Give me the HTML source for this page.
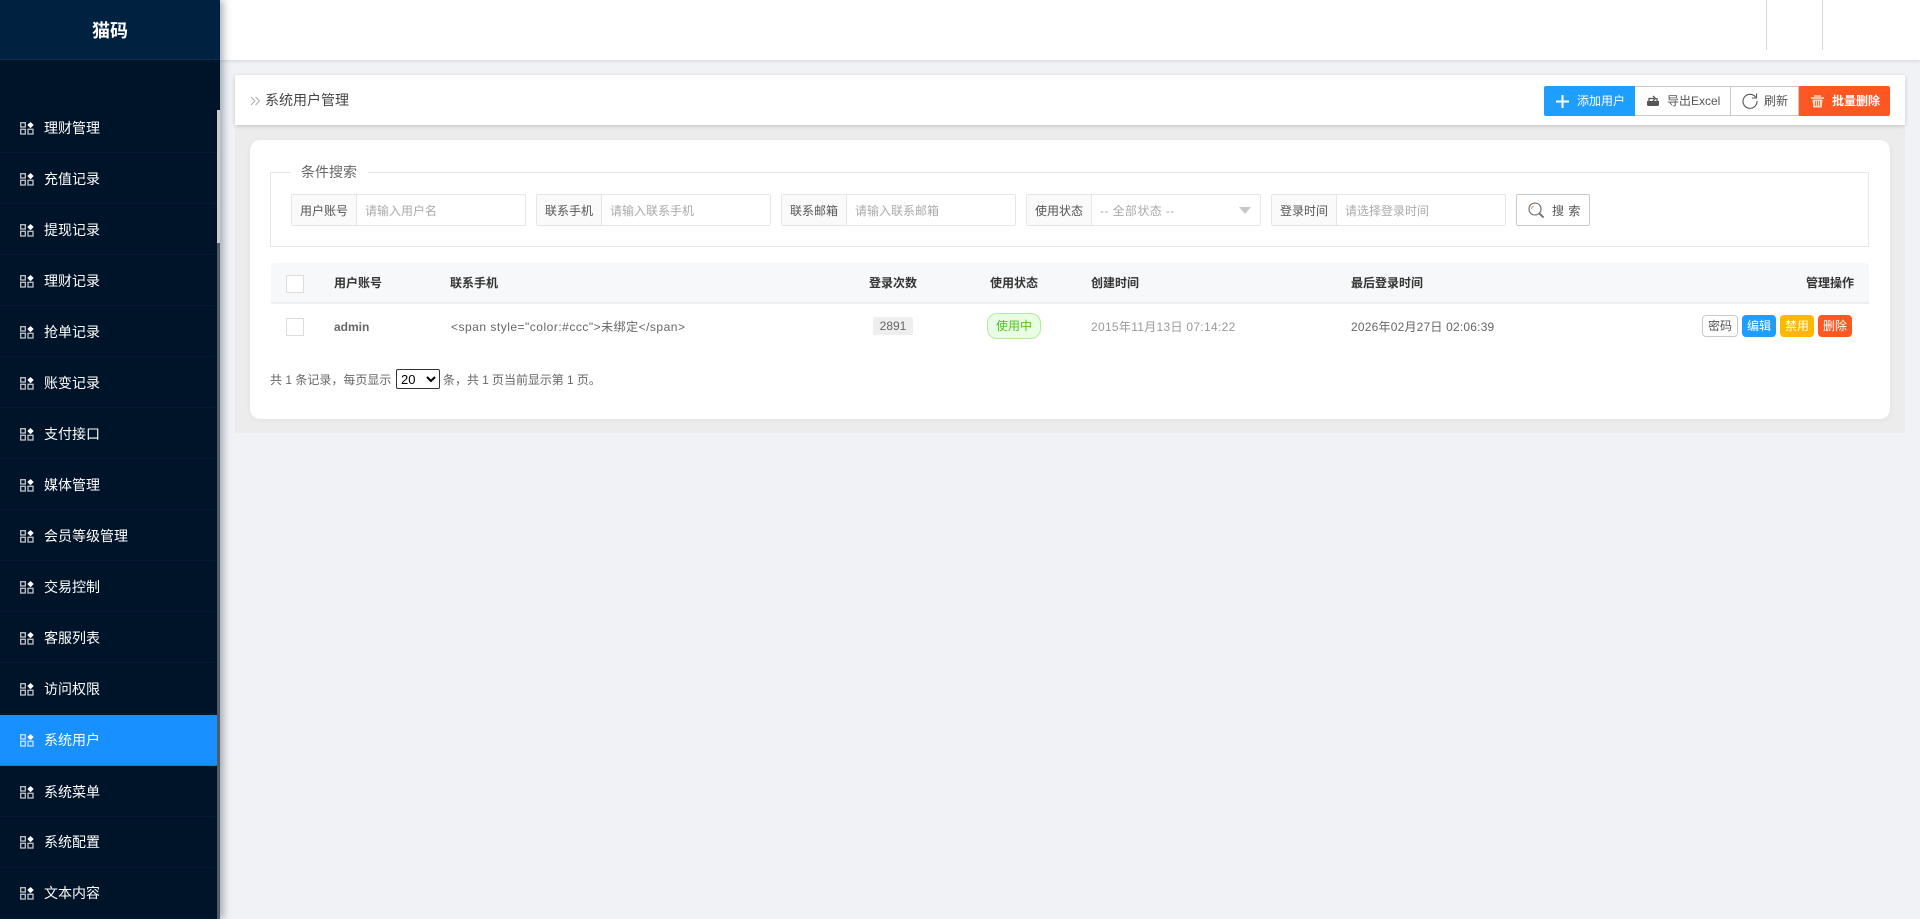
<!DOCTYPE html>
<html lang="zh-CN">
<head>
<meta charset="utf-8">
<title>系统用户管理</title>
<style>
*{box-sizing:border-box;margin:0;padding:0}
html,body{width:1920px;height:919px;overflow:hidden;background:#f0f2f6;font-family:"Liberation Sans","Noto Sans CJK SC",sans-serif;font-size:12px;color:#555}
.a{position:absolute;white-space:nowrap}
#side{left:0;top:0;width:220px;height:919px;background:#001429;box-shadow:3px 0 8px rgba(0,21,41,.35);z-index:5}
#logo{left:0;top:0;width:220px;height:60px;background:#002140;border-bottom:1px solid #0a2c4c;color:#fff;font-size:18px;font-weight:bold;text-align:center;line-height:62px}
.mi{left:0;width:217px;height:51px;line-height:53px;color:#fff;font-size:14px;padding-left:44px;border-bottom:1px solid #001a30}
.mi svg{position:absolute;left:20px;top:20px}
.mi.on{background:#1890ff;border-bottom:1px solid #0a8a9a}
#sb1{left:217px;top:110px;width:3px;height:133px;background:#c9cbce}
#sb2{left:217px;top:243px;width:3px;height:676px;background:#555a60}
#head{left:220px;top:0;width:1700px;height:60px;background:#fff;box-shadow:0 1px 4px rgba(0,0,0,.12)}
.vl{top:0;width:1px;height:50px;background:#d8d8d8}
#zone{left:235px;top:125px;width:1670px;height:308px;background:#ececec}
#crumb{left:235px;top:75px;width:1670px;height:50px;background:#fff;box-shadow:0 1px 4px rgba(0,0,0,.18)}
#card{left:250px;top:140px;width:1640px;height:279px;background:#fff;border-radius:10px;box-shadow:0 1px 6px rgba(0,0,0,.05)}
.btn{top:86px;height:30px;line-height:29px;font-size:12px;background:#fff;border:1px solid #c9c9c9;color:#555}
.btn svg{position:absolute}
.btn span{position:absolute;top:0}
#fs{left:270px;top:172px;width:1599px;height:75px;border:1px solid #e6e6e6}
#lg{left:290px;top:162px;width:78px;height:20px;background:#fff;color:#666;font-size:14px;line-height:20px;text-align:center}
.ig{top:194px;height:32px;width:235px;border:1px solid #e6e6e6;border-radius:2px;background:#fff}
.ig b{position:absolute;left:0;top:0;width:65px;height:30px;font-weight:normal;background:#fafafa;border-right:1px solid #e6e6e6;text-align:center;line-height:32px;color:#555;font-size:12px}
.ig i{position:absolute;left:73px;top:0;font-style:normal;line-height:32px;color:#aaa;font-size:12px}
#th{left:271px;top:263px;width:1598px;height:41px;background:#f7f8fa;border-bottom:2px solid #eee;border-radius:4px 4px 0 0}
.cb{left:286px;width:18px;height:18px;border:1px solid #ddd;background:#fff}
.h{top:274px;line-height:18px;color:#333;font-size:12px;font-weight:bold}
.d{top:318px;line-height:18px;font-size:12px;color:#666}
.ab{top:315px;height:22px;line-height:20px;width:34px;text-align:center;border-radius:4px;color:#fff;font-size:12px;border:1px solid transparent}
</style>
</head>
<body>
<svg width="0" height="0" style="position:absolute"><defs>
<symbol id="ic" viewBox="0 0 14 13"><g fill="none" stroke="#fff" stroke-width="1.300" opacity=".75"><rect x=".7" y=".7" width="4.600" height="4.300"/><rect x=".7" y="7.300" width="4.600" height="4.700"/><rect x="8" y="7.300" width="5" height="4.700"/></g><path d="M10.500 0l3.200 3-3.200 3.200L7.300 3z" fill="#fff"/></symbol>
</defs></svg>

<div class="a" id="side">
  <div class="a" id="logo">猫码</div>
  <div class="a mi" style="top:102px"><svg width="14" height="13"><use href="#ic"/></svg>理财管理</div>
  <div class="a mi" style="top:153px"><svg width="14" height="13"><use href="#ic"/></svg>充值记录</div>
  <div class="a mi" style="top:204px"><svg width="14" height="13"><use href="#ic"/></svg>提现记录</div>
  <div class="a mi" style="top:255px"><svg width="14" height="13"><use href="#ic"/></svg>理财记录</div>
  <div class="a mi" style="top:306px"><svg width="14" height="13"><use href="#ic"/></svg>抢单记录</div>
  <div class="a mi" style="top:357px"><svg width="14" height="13"><use href="#ic"/></svg>账变记录</div>
  <div class="a mi" style="top:408px"><svg width="14" height="13"><use href="#ic"/></svg>支付接口</div>
  <div class="a mi" style="top:459px"><svg width="14" height="13"><use href="#ic"/></svg>媒体管理</div>
  <div class="a mi" style="top:510px"><svg width="14" height="13"><use href="#ic"/></svg>会员等级管理</div>
  <div class="a mi" style="top:561px"><svg width="14" height="13"><use href="#ic"/></svg>交易控制</div>
  <div class="a mi" style="top:612px"><svg width="14" height="13"><use href="#ic"/></svg>客服列表</div>
  <div class="a mi" style="top:663px"><svg width="14" height="13"><use href="#ic"/></svg>访问权限</div>
  <div class="a mi on" style="top:715px;line-height:50px"><svg width="14" height="13" style="top:19px"><use href="#ic"/></svg>系统用户</div>
  <div class="a mi" style="top:766px"><svg width="14" height="13"><use href="#ic"/></svg>系统菜单</div>
  <div class="a mi" style="top:817px;line-height:51px"><svg width="14" height="13" style="top:19px"><use href="#ic"/></svg>系统配置</div>
  <div class="a mi" style="top:868px;line-height:51px"><svg width="14" height="13" style="top:19px"><use href="#ic"/></svg>文本内容</div>
  <div class="a" id="sb1"></div>
  <div class="a" id="sb2"></div>
</div>

<div class="a" id="head"></div>
<div class="a vl" style="left:1766px"></div>
<div class="a vl" style="left:1822px"></div>

<div class="a" id="zone"></div>
<div class="a" id="crumb"></div>
<svg class="a" style="left:250px;top:96px" width="11" height="10" viewBox="0 0 11 10"><path d="M1 1l4 4-4 4M5.500 1l4 4-4 4" fill="none" stroke="#aaa" stroke-width="1"/></svg>
<div class="a" style="left:265px;top:90px;font-size:14px;line-height:20px;color:#444">系统用户管理</div>

<div class="a btn" style="left:1544px;width:91px;background:#1e9fff;border-color:#1e9fff;color:#fff;border-radius:2px 0 0 2px">
  <svg style="left:11px;top:8px" width="13" height="13" viewBox="0 0 13 13"><path d="M6.500 0v13M0 6.500h13" stroke="#fff" stroke-width="2"/></svg>
  <span style="left:32px">添加用户</span>
</div>
<div class="a btn" style="left:1635px;width:96px;border-left:0">
  <svg style="left:11px;top:6px" width="14" height="14" viewBox="0 0 14 14"><path d="M1 8h12v3.500q0 1.500-1.500 1.500h-9Q1 13 1 11.500z" fill="#555"/><path d="M3 8V5.500h5M7 3l2.500 2.500L7 8M11 8V5" fill="none" stroke="#555" stroke-width="1.300"/></svg>
  <span style="left:32px">导出Excel</span>
</div>
<div class="a btn" style="left:1730px;width:69px">
  <svg style="left:11px;top:6px" width="16" height="16" viewBox="0 0 16 16"><path d="M13.500 4A7 7 0 1 0 15 8" fill="none" stroke="#555" stroke-width="1.100"/><path d="M14.500 .5v4.500H10" fill="none" stroke="#555" stroke-width="1.100"/></svg>
  <span style="left:33px">刷新</span>
</div>
<div class="a btn" style="left:1799px;width:91px;background:#ff5722;border-color:#ff5722;color:#fff;border-radius:0 2px 2px 0;font-weight:bold">
  <svg style="left:11px;top:8px" width="13" height="13" viewBox="0 0 13 13"><path d="M0 3h13M3 1h7" stroke="#ffd9cc" stroke-width="1.400" fill="none"/><path d="M1.500 4.500h10l-.8 8H2.300z" fill="#ffd9cc"/><path d="M4.500 6v5M6.500 6v5M8.500 6v5" stroke="#ff5722" stroke-width=".8"/></svg>
  <span style="left:32px">批量删除</span>
</div>

<div class="a" id="card"></div>
<div class="a" id="fs"></div>
<div class="a" id="lg">条件搜索</div>

<div class="a ig" style="left:291px"><b>用户账号</b><i>请输入用户名</i></div>
<div class="a ig" style="left:536px"><b>联系手机</b><i>请输入联系手机</i></div>
<div class="a ig" style="left:781px"><b>联系邮箱</b><i>请输入联系邮箱</i></div>
<div class="a ig" style="left:1026px"><b>使用状态</b><i style="letter-spacing:.4px">-- 全部状态 --</i>
  <svg style="position:absolute;right:9px;top:12px" width="12" height="7" viewBox="0 0 12 7"><path d="M0 0h12L6 7z" fill="#c8c8c8"/></svg>
</div>
<div class="a ig" style="left:1271px"><b>登录时间</b><i>请选择登录时间</i></div>
<div class="a" style="left:1516px;top:194px;width:74px;height:32px;border:1px solid #c9c9c9;border-radius:2px;background:#fff;line-height:32px;font-size:12px;color:#555;padding-left:35px;letter-spacing:.5px">搜 索
  <svg style="position:absolute;left:11px;top:7px" width="17" height="17" viewBox="0 0 17 17"><circle cx="7" cy="7" r="6" fill="none" stroke="#666" stroke-width="1.100"/><path d="M11.500 11.500l4 4" stroke="#666" stroke-width="1.800"/><path d="M3.500 7a3.500 3.500 0 0 1 2-3" fill="none" stroke="#c96" stroke-width="1"/></svg>
</div>

<div class="a" id="th"></div>
<div class="a cb" style="top:275px"></div>
<div class="a h" style="left:334px">用户账号</div>
<div class="a h" style="left:450px">联系手机</div>
<div class="a h" style="left:869px">登录次数</div>
<div class="a h" style="left:990px">使用状态</div>
<div class="a h" style="left:1091px">创建时间</div>
<div class="a h" style="left:1351px">最后登录时间</div>
<div class="a h" style="left:1806px">管理操作</div>

<div class="a cb" style="top:318px"></div>
<div class="a d" style="left:334px;font-weight:bold">admin</div>
<div class="a d" style="left:451px;letter-spacing:.5px">&lt;span style="color:#ccc"&gt;未绑定&lt;/span&gt;</div>
<div class="a d" style="left:873px;top:317px;width:40px;height:18px;background:#eee;border-radius:2px;text-align:center">2891</div>
<div class="a d" style="left:987px;top:313px;width:54px;height:26px;line-height:24px;background:#e9fde5;border:1px solid #b4ec9e;border-radius:10px;color:#52c41a;text-align:center">使用中</div>
<div class="a d" style="left:1091px;color:#999;letter-spacing:.3px">2015年11月13日 07:14:22</div>
<div class="a d" style="left:1351px;letter-spacing:.2px">2026年02月27日 02:06:39</div>

<div class="a ab" style="left:1702px;width:36px;background:#fff;border-color:#c9c9c9;color:#555">密码</div>
<div class="a ab" style="left:1742px;background:#1e9fff">编辑</div>
<div class="a ab" style="left:1780px;background:#ffb800">禁用</div>
<div class="a ab" style="left:1818px;background:#ff5722">删除</div>

<div class="a" style="left:270px;top:370px;line-height:20px;font-size:12px;color:#666">共 1 条记录，每页显示</div>
<select class="a" style="left:396px;top:369px;width:44px;height:20px;font-size:13px;font-family:'Liberation Sans',sans-serif;background:#fff;color:#000;border:1px solid #333;border-radius:2px"><option>20</option></select>
<div class="a" style="left:443px;top:370px;line-height:20px;font-size:12px;color:#666;letter-spacing:-.05px">条，共 1 页当前显示第 1 页。</div>
</body>
</html>
